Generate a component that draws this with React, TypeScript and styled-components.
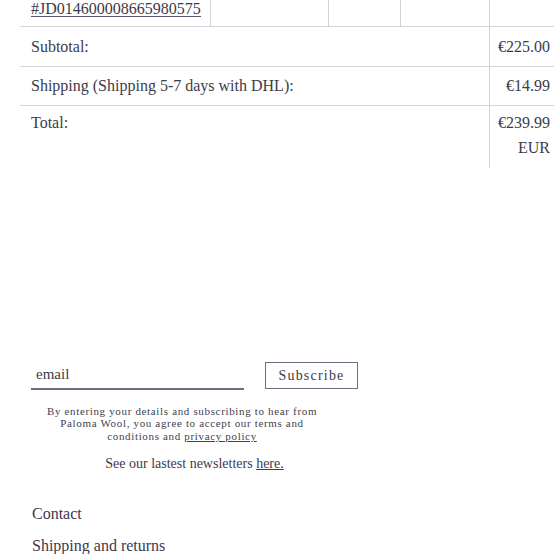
import React from "react";
import styled, { createGlobalStyle } from "styled-components";

const GlobalStyle = createGlobalStyle`
  html, body {
    margin: 0;
    padding: 0;
    background: #ffffff;
  }
  body {
    font-family: "Liberation Serif", "Times New Roman", serif;
    color: #3c3b4a;
  }
`;

const Page = styled.div`
  width: 554px;
  height: 554px;
  overflow: hidden;
  position: relative;
`;

const OrderTable = styled.table`
  margin-left: 20px;
  width: 534px;
  border-collapse: collapse;
  table-layout: fixed;
  font-size: 16px;
`;

const Cell = styled.td<{ $right?: boolean; $divider?: boolean }>`
  padding: 0 ${({ $right }) => ($right ? "4px" : "11px")};
  text-align: ${({ $right }) => ($right ? "right" : "left")};
  border-right: ${({ $divider }) => ($divider ? "1px solid #d3d3d9" : "none")};
  vertical-align: middle;
  white-space: nowrap;
`;

const ItemRow = styled.tr`
  height: 24px;
  border-bottom: 1px solid #d3d3d9;
  td {
    vertical-align: bottom;
    padding-bottom: 8px;
  }
`;

const SumRow = styled.tr<{ $height: number; $last?: boolean }>`
  height: ${({ $height }) => $height}px;
  border-bottom: ${({ $last }) => ($last ? "none" : "1px solid #d3d3d9")};
`;

const TotalCell = styled(Cell)`
  vertical-align: top;
  padding-top: 4px;
  padding-bottom: 8px;
  line-height: 25px;
`;

const OrderNumber = styled.span`
  display: inline-block;
  line-height: 14px;
  border-bottom: 1.5px solid #55546a;
`;

const Newsletter = styled.section`
  margin-top: 194px;
  width: 358px;
`;

const Form = styled.form`
  display: flex;
  align-items: flex-end;
  gap: 21px;
  padding-left: 31px;
`;

const EmailInput = styled.input`
  width: 213px;
  height: 27px;
  box-sizing: border-box;
  border: none;
  border-bottom: 2px solid #6f6e80;
  padding: 0 0 2px 5px;
  font-family: inherit;
  font-size: 15px;
  color: #3c3b4a;
  outline: none;
  background: transparent;
  &::placeholder {
    color: #3c3b4a;
  }
`;

const SubscribeButton = styled.button`
  width: 93px;
  height: 27px;
  box-sizing: border-box;
  border: 1.5px solid #6f6e80;
  background: #fff;
  font-family: inherit;
  font-size: 14px;
  letter-spacing: 1.2px;
  color: #3c3b4a;
  padding: 0;
  margin-bottom: 1px;
`;

const Disclaimer = styled.p`
  width: 284px;
  margin: 15px 0 0 40px;
  text-align: center;
  font-size: 11px;
  line-height: 12.3px;
  letter-spacing: 0.66px;
  color: #424150;

  a {
    color: inherit;
  }
`;

const LatestLine = styled.p`
  margin: 13px 0 0 31px;
  width: 327px;
  text-align: center;
  font-size: 14px;
  line-height: 18px;

  a {
    color: inherit;
  }
`;

const FooterLinks = styled.nav`
  display: flex;
  flex-direction: column;
  gap: 12px;
  margin-top: 31px;
  padding-left: 32px;
`;

const FooterLink = styled.a`
  font-size: 16px;
  line-height: 20px;
  color: #3c3b4a;
  text-decoration: none;
`;

export default function App() {
  return (
    <Page>
      <GlobalStyle />
      <OrderTable>
        <colgroup>
          <col style={{ width: 190 }} />
          <col style={{ width: 118 }} />
          <col style={{ width: 72 }} />
          <col style={{ width: 89 }} />
          <col style={{ width: 65 }} />
        </colgroup>
        <tbody>
          <ItemRow>
            <Cell $divider>
              <OrderNumber>#JD014600008665980575</OrderNumber>
            </Cell>
            <Cell $divider />
            <Cell $divider />
            <Cell $divider />
            <Cell $right />
          </ItemRow>
          <SumRow $height={40}>
            <Cell colSpan={4} $divider>
              Subtotal:
            </Cell>
            <Cell $right>€225.00</Cell>
          </SumRow>
          <SumRow $height={39}>
            <Cell colSpan={4} $divider>
              Shipping (Shipping 5-7 days with DHL):
            </Cell>
            <Cell $right>€14.99</Cell>
          </SumRow>
          <SumRow $height={62} $last>
            <TotalCell colSpan={4} $divider>
              Total:
            </TotalCell>
            <TotalCell $right>
              €239.99
              <br />
              EUR
            </TotalCell>
          </SumRow>
        </tbody>
      </OrderTable>

      <Newsletter>
        <Form onSubmit={(e) => e.preventDefault()}>
          <EmailInput type="email" placeholder="email" />
          <SubscribeButton type="submit">Subscribe</SubscribeButton>
        </Form>
        <Disclaimer>
          By entering your details and subscribing to hear from Paloma Wool,
          you agree to accept our terms and conditions and{" "}
          <a href="#">privacy policy</a>
        </Disclaimer>
        <LatestLine>
          See our lastest newsletters <a href="#">here.</a>
        </LatestLine>
      </Newsletter>

      <FooterLinks>
        <FooterLink href="#">Contact</FooterLink>
        <FooterLink href="#">Shipping and returns</FooterLink>
      </FooterLinks>
    </Page>
  );
}
